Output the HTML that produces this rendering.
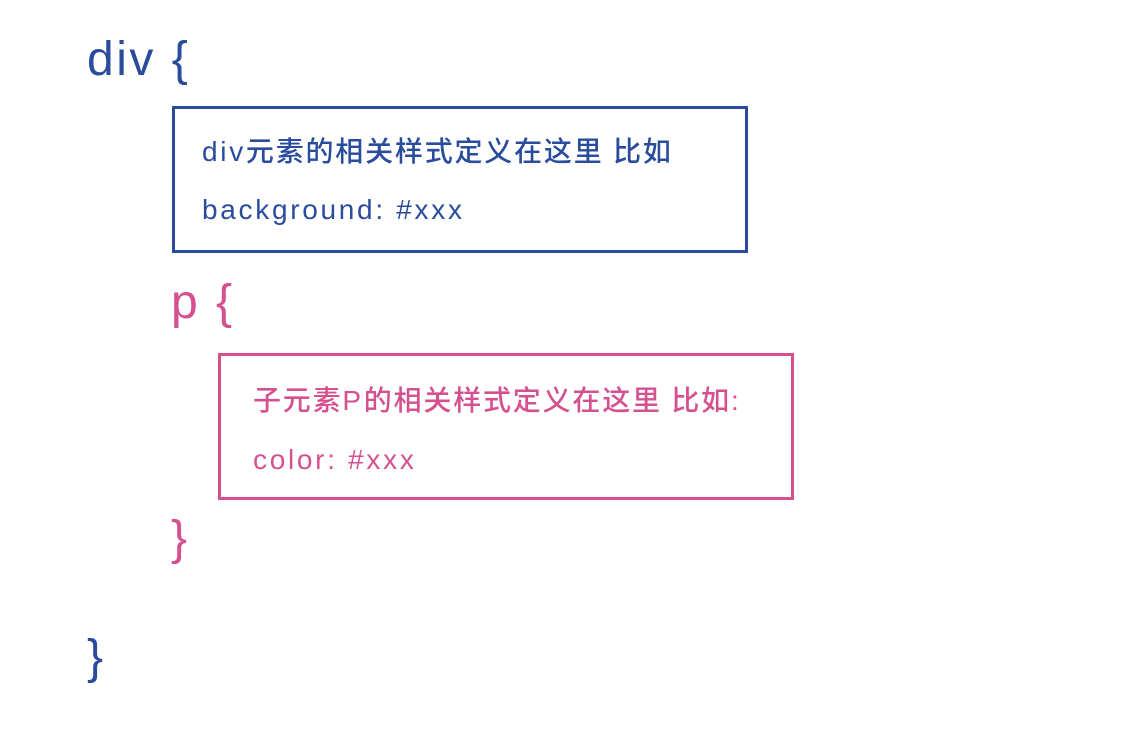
<!DOCTYPE html>
<html><head><meta charset="utf-8"><style>
body{margin:0;width:1136px;height:736px;background:#fff;position:relative;overflow:hidden;font-family:"Liberation Sans","Noto Sans CJK SC",sans-serif}
.a{position:absolute;white-space:nowrap;line-height:1}
.b{color:#2a4c9c}.p{color:#d5508f}
.big{font-size:48px;letter-spacing:2.5px}
.t{font-size:28px;letter-spacing:2.7px}
.c{letter-spacing:1.8px;font-weight:500}
.box{position:absolute;box-sizing:border-box;border:3px solid}
</style></head><body>
<div class="a b big" style="left:87px;top:36px">div {</div>
<div class="box b" style="left:172px;top:106px;width:576px;height:147px;border-color:#2a4c9c"></div>
<div class="a b t" style="left:202px;top:138px">div<span class="c">元素的相关样式定义在这里 比如</span></div>
<div class="a b t" style="left:202px;top:196px">background: #xxx</div>
<div class="a p big" style="left:171px;top:279px">p {</div>
<div class="box p" style="left:218px;top:353px;width:576px;height:147px;border-color:#d5508f"></div>
<div class="a p t" style="left:253px;top:387px"><span class="c">子元素</span>P<span class="c">的相关样式定义在这里 比如</span>:</div>
<div class="a p t" style="left:253px;top:446px">color: #xxx</div>
<div class="a p big" style="left:171px;top:515px">}</div>
<div class="a b big" style="left:87px;top:634px">}</div>
</body></html>
